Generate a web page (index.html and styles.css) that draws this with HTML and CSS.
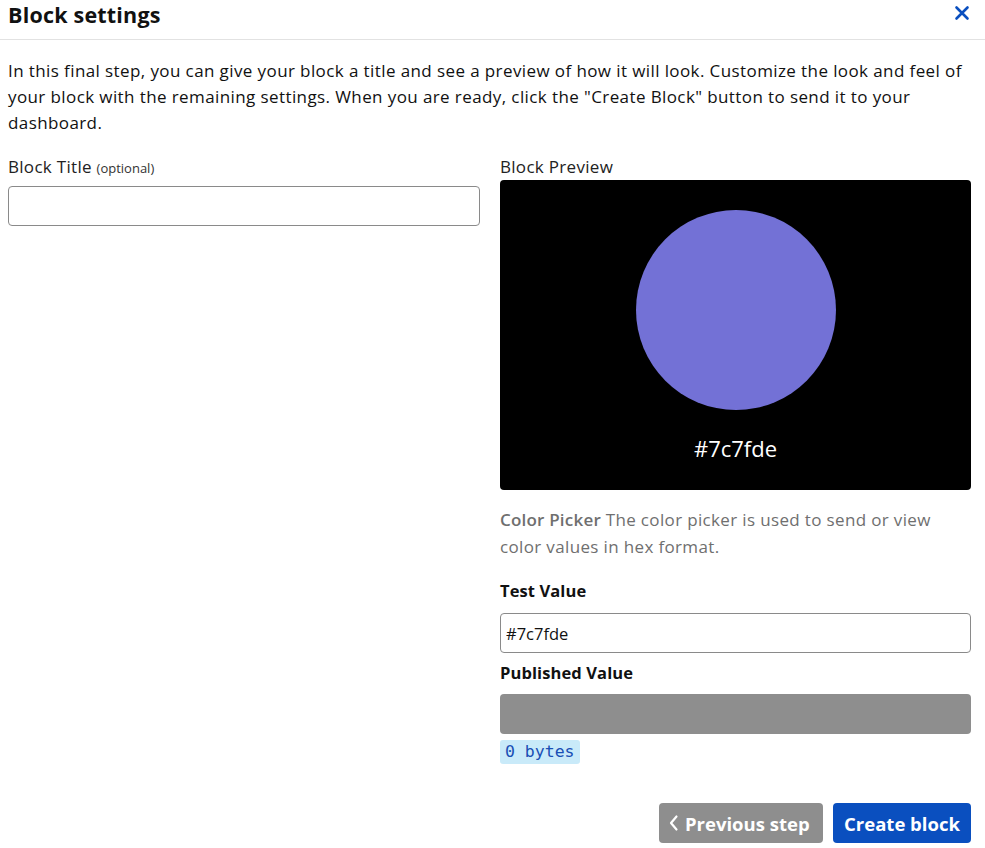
FILE: index.html
```
<!DOCTYPE html>
<html>
<head>
<meta charset="utf-8">
<link rel="stylesheet" href="styles.css">
</head>
<body>
<div class="modal">
  <header class="header">
    <h1 class="title">Block settings</h1>
    <button class="close" aria-label="Close">
      <svg width="16" height="16" viewBox="0 0 16 16"><path d="M2.5 2.5 L13.5 13.5 M13.5 2.5 L2.5 13.5" stroke="#0a4fbf" stroke-width="2.6" stroke-linecap="round"/></svg>
    </button>
  </header>
  <div class="body">
    <p class="intro">In this final step, you can give your block a title and see a preview of how it will look. Customize the look and feel of your block with the remaining settings. When you are ready, click the "Create Block" button to send it to your dashboard.</p>
    <div class="cols">
      <div class="col">
        <label class="label ttl">Block Title <span class="opt">(optional)</span></label>
        <input class="input" type="text">
      </div>
      <div class="col">
        <div class="label">Block Preview</div>
        <div class="preview">
          <div class="circle"></div>
          <div class="hex">#7c7fde</div>
        </div>
        <p class="desc"><b class="strong">Color Picker</b> The color picker is used to send or view color values in hex format.</p>
        <div class="blabel">Test Value</div>
        <input class="input val" type="text" value="#7c7fde">
        <div class="blabel pub">Published Value</div>
        <div class="published"></div>
        <span class="bytes">0 bytes</span>
      </div>
    </div>
    <div class="actions">
      <button class="btn prev"><svg width="12" height="18" viewBox="0 0 12 18"><path d="M8.5 2.5 L3 9 L8.5 15.5" stroke="#fff" stroke-width="2.2" fill="none" stroke-linecap="round" stroke-linejoin="round"/></svg>Previous step</button>
      <button class="btn create">Create block</button>
    </div>
  </div>
</div>
</body>
</html>
```
FILE: styles.css
```
* { box-sizing: border-box; }
body { margin: 0; background: #fff; font-family: "Open Sans", Lato, sans-serif; color: #111; }
.modal { width: 985px; }
.header { display: flex; align-items: flex-start; justify-content: space-between; height: 40px; border-bottom: 1px solid #e2e2e2; padding: 0 14px 0 8px; }
.title { margin: 0; font-size: 21.5px; line-height: 29px; font-weight: 700; color: #111; letter-spacing: 0.2px; }
.close { background: none; border: 0; padding: 0; display: flex; margin-right: 1px; margin-top: 5px; }
.body { padding: 0 14px 0 8px; }
.intro { margin: 18px 0 0; font-size: 17px; line-height: 26px; color: #111; letter-spacing: 0.4px; }
.cols { display: grid; grid-template-columns: 472px 471px; column-gap: 20px; margin-top: 20px; }
.col { display: flex; flex-direction: column; align-items: flex-start; }
.label { font-size: 17px; line-height: 22px; color: #222; margin-bottom: 2px; letter-spacing: 0.3px; }
.label.ttl { margin-bottom: 7px; }
.opt { font-size: 13px; color: #333; letter-spacing: 0; }
.input { width: 100%; height: 40px; border: 1px solid #8a8a8a; border-radius: 4px; font-family: inherit; font-size: 16.5px; padding: 0 5px; color: #111; }
.preview { width: 100%; height: 310px; background: #000; border-radius: 4px; display: flex; flex-direction: column; align-items: center; padding-top: 30px; }
.circle { width: 200px; height: 200px; border-radius: 50%; background: #7371d6; }
.hex { color: #fff; font-size: 22px; line-height: 30px; margin-top: 23px; }
.desc { margin: 16px 0 0; font-size: 17px; line-height: 27px; color: #6f6f6f; letter-spacing: 0.35px; }
.strong { font-weight: 600; letter-spacing: 0.2px; }
.blabel { font-size: 16.5px; font-weight: 700; line-height: 22px; margin-top: 20px; margin-bottom: 11px; color: #111; letter-spacing: 0.1px; }
.blabel.pub { margin-top: 9px; margin-bottom: 10px; }
.published { width: 100%; height: 40px; background: #8e8e8e; border-radius: 4px; }
.bytes { margin-top: 6px; background: #c9eaf9; color: #1a4fb5; font-family: "DejaVu Sans Mono", monospace; font-size: 16.5px; line-height: 24px; padding: 0 5px; border-radius: 3px; }
.actions { display: flex; justify-content: flex-end; gap: 10px; margin-top: 39px; }
.btn { height: 40px; border: 0; border-radius: 4px; color: #fff; font-family: inherit; font-size: 18.5px; font-weight: 700; display: flex; align-items: center; gap: 5px; padding: 0 9px; white-space: nowrap; }
.prev { background: #8e8e8e; width: 164px; }
.create { background: #0a4fbf; width: 138px; justify-content: center; }
```
